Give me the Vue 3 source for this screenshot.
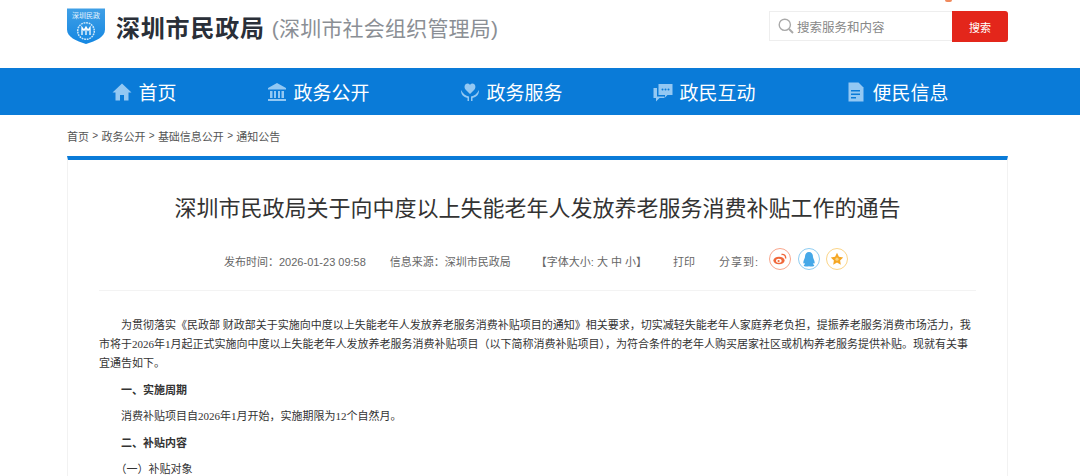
<template>
  <div class="page">
    <header class="top container">
      <div class="brand">
        <svg class="logo" width="38" height="36" viewBox="0 0 38 36">
          <defs>
            <linearGradient id="shield" x1="0" y1="0" x2="0" y2="1">
              <stop offset="0" stop-color="#3f9fe6" />
              <stop offset="1" stop-color="#1487e2" />
            </linearGradient>
          </defs>
          <path d="M0 .5h38v21c0 7.500-9 11.500-19 14.500C9 33 0 29 0 21.500z" fill="url(#shield)" />
          <circle cx="19" cy="23" r="8.300" fill="none" stroke="#cfe8fa" stroke-width="1.500" stroke-dasharray="1.800 .8" />
          <path d="M15 27v-7.500l2 2.800 2-3.300 2 3.300 2-2.800V27M19 21v6" fill="none" stroke="#fff" stroke-width="1.300" />
          <text x="19" y="10" text-anchor="middle" class="logo-text">深圳民政</text>
        </svg>
        <span class="brand-name">深圳市民政局</span>
        <span class="brand-sub">(深圳市社会组织管理局)</span>
      </div>
      <div class="search">
        <div class="search-box">
          <svg width="16" height="16" viewBox="0 0 16 16" fill="none" stroke="#a9a9a9">
            <circle cx="6.800" cy="6.800" r="5.600" stroke-width="1.400" />
            <path d="M11 11l4 4" stroke-width="2" />
          </svg>
          <span>搜索服务和内容</span>
        </div>
        <button type="button" class="search-btn">搜索</button>
      </div>
      <span class="corner-mark"></span>
    </header>

    <nav class="nav">
      <div class="nav-inner">
        <a v-for="item in navItems" :key="item.label" class="nav-item">
          <svg width="20" height="20" viewBox="0 0 20 20" fill="#93c8f3" v-html="item.icon"></svg>
          <span>{{ item.label }}</span>
        </a>
      </div>
    </nav>

    <div class="crumbs container">
      <template v-for="(c, i) in crumbs" :key="c">
        <span v-if="i" class="sep">&gt;</span>
        <span>{{ c }}</span>
      </template>
    </div>

    <main class="card container">
      <h1>深圳市民政局关于向中度以上失能老年人发放养老服务消费补贴工作的通告</h1>
      <div class="meta">
        <span class="date">发布时间：2026-01-23 09:58</span>
        <span class="source">信息来源：深圳市民政局</span>
        <span class="size">【字体大小: 大 中 小】</span>
        <span class="print">打印</span>
        <span class="share">分享到:</span>
        <span class="share-icon weibo">
          <svg width="14" height="12" viewBox="0 0 14 12">
            <ellipse cx="6" cy="7.500" rx="5.600" ry="3.800" fill="#f0683a" />
            <ellipse cx="5.800" cy="7.800" rx="2.800" ry="2" fill="#fff" />
            <circle cx="5.600" cy="8" r="1.100" fill="#f0683a" />
            <path d="M8.500 1.500c2.500-.6 4.600 1.400 4 4" fill="none" stroke="#f0683a" stroke-width="1.400" />
          </svg>
        </span>
        <span class="share-icon qq">
          <svg width="12" height="15" viewBox="0 0 12 15">
            <path d="M6 0c2.800 0 4 2.200 4 5 0 1 1.700 3.500 1.700 5.800 0 1-.7 1-1.500.2-.2 1 .1 1.500 1 2.300.3.800-1 1.200-3 1.200-1 0-1.600-.3-2.200-.3s-1.200.3-2.200.3c-2 0-3.300-.4-3-1.200.9-.8 1.200-1.300 1-2.300-.8.8-1.500.8-1.500-.2C.3 8.500 2 6 2 5c0-2.800 1.200-5 4-5z" fill="#46a8e8" />
          </svg>
        </span>
        <span class="share-icon star">
          <svg width="14" height="14" viewBox="0 0 14 14">
            <path d="M7 .8l1.900 4 4.300.6-3.100 3 .7 4.300L7 10.600l-3.800 2.100.7-4.300-3.100-3 4.300-.6z" fill="#f5a623" />
            <circle cx="7" cy="7.200" r="1.600" fill="#fbd27e" />
          </svg>
        </span>
      </div>
      <article class="content">
        <p>为贯彻落实《民政部 财政部关于实施向中度以上失能老年人发放养老服务消费补贴项目的通知》相关要求，切实减轻失能老年人家庭养老负担，提振养老服务消费市场活力，我市将于2026年1月起正式实施向中度以上失能老年人发放养老服务消费补贴项目（以下简称消费补贴项目），为符合条件的老年人购买居家社区或机构养老服务提供补贴。现就有关事宜通告如下。</p>
        <p class="strong">一、实施周期</p>
        <p>消费补贴项目自2026年1月开始，实施期限为12个自然月。</p>
        <p class="strong">二、补贴内容</p>
        <p class="sub">（一）补贴对象</p>
      </article>
    </main>
  </div>
</template>

<script setup>
const navItems = [
  { label: '首页', icon: '<path d="M10 1.500 .5 10.500h3v8H8V13h4v5.500h4.500v-8h3z"/>' },
  { label: '政务公开', icon: '<path d="M10 1 1 6v1.500h18V6zM1 17h18v2H1zM3 9h2.500v7H3zM7 9h2v7H7zM11 9h2v7h-2zM14.500 9H17v7h-2.500z"/>' },
  { label: '政务服务', icon: '<path d="M10 12 5.500 7.500C3.500 5 5 1.500 7.500 1.500c1 0 2 .5 2.500 1.500.5-1 1.500-1.500 2.500-1.500C15 1.500 16.500 5 14.500 7.500z"/><path d="M1 8c0 5 2.500 7 6.500 8v3H9v-4.500C5.500 13.500 3 12 1 8zM19 8c0 5-2.500 7-6.500 8v3H11v-4.500c3.500-1 6-2.500 8-6.500z"/>' },
  { label: '政民互动', icon: '<path d="M5.500 2h14v11h-5L12 15.500V13H5.500z"/><path d="M4 6H.5v10H3v3.500L6.500 16h5v-1.500H4z"/><circle cx="9.500" cy="7.500" r="1" fill="#0a7bd8"/><circle cx="12.500" cy="7.500" r="1" fill="#0a7bd8"/><circle cx="15.500" cy="7.500" r="1" fill="#0a7bd8"/>' },
  { label: '便民信息', icon: '<path d="M2.500.5h10l5 5v14h-15z"/><path d="M5 8h9v1.500H5zM5 11.500h9V13H5zM5 15h5v1.500H5z" fill="#0a7bd8"/>' },
]

const crumbs = ['首页', '政务公开', '基础信息公开', '通知公告']
</script>

<style>
html,
body {
  margin: 0;
  background: #fff;
  overflow: hidden;
}
</style>

<style scoped>
.page {
  height: 476px;
  overflow: hidden;
  font-family: 'Liberation Sans', 'Noto Sans CJK SC', sans-serif;
  color: #666;
}

.container {
  width: 941px;
  margin: 0 auto;
  box-sizing: border-box;
  position: relative;
  left: -2.500px;
}

.top {
  height: 68px;
  display: flex;
  justify-content: space-between;
  align-items: flex-start;
}

.brand {
  display: flex;
  align-items: center;
  height: 53px;
}

.logo {
  align-self: flex-start;
  margin-top: 8px;
}

.logo-text {
  font-size: 7px;
  fill: #e6f4ff;
  font-family: 'Liberation Serif', 'Noto Sans CJK SC', serif;
}

.brand-name {
  margin-left: 11px;
  font-size: 24px;
  font-weight: 700;
  color: #2a2f38;
  letter-spacing: 0.8px;
}

.brand-sub {
  margin-left: 7px;
  font-size: 21px;
  color: #8b8f95;
  letter-spacing: 0.2px;
}

.search {
  display: flex;
  margin-top: 11px;
}

.search-box {
  width: 183px;
  height: 30px;
  border: 1px solid #eee;
  border-right: none;
  display: flex;
  align-items: center;
  gap: 3px;
  padding-left: 8px;
  box-sizing: border-box;
  font-size: 12.500px;
  color: #888;
}

.search-btn {
  width: 56px;
  height: 31px;
  border: none;
  border-radius: 0 3px 3px 0;
  background: #e3261b;
  color: #fff;
  font-size: 11px;
  font-family: inherit;
  padding: 0;
}

.corner-mark {
  position: absolute;
  left: 878px;
  top: 0;
  width: 7px;
  height: 2px;
  background: #f08a5d;
  border-radius: 0 0 3px 3px;
}

.nav {
  height: 47px;
  background: #0a7bd8;
  box-sizing: border-box;
}

.nav-inner {
  display: flex;
  gap: 90px;
  padding-left: 111.500px;
}

.nav-item {
  display: flex;
  align-items: center;
  gap: 7px;
  height: 47px;
  color: #fff;
  font-size: 19px;
}

.crumbs {
  height: 41px;
  display: flex;
  align-items: center;
  gap: 3.300px;
  font-size: 11px;
  color: #555;
}

.sep {
  font-size: 10px;
}

.card {
  border: 1px solid #f2f2f2;
  border-top: 4px solid #0a7bd8;
  padding: 0 31px;
  height: 400px;
}

h1 {
  margin: 32px 0 0;
  height: 34px;
  line-height: 34px;
  text-align: center;
  font-size: 22px;
  font-weight: 400;
  color: #333;
}

.meta {
  display: flex;
  align-items: center;
  height: 65px;
  padding: 5px 0 0 125px;
  border-bottom: 1px solid #f3f3f3;
  font-size: 11px;
  color: #666;
  box-sizing: border-box;
}

.source {
  margin-left: 24px;
}

.size {
  margin-left: 25px;
}

.print {
  margin-left: 26px;
}

.share {
  margin-left: 24px;
  letter-spacing: 1px;
}

.share-icon {
  width: 22px;
  height: 22px;
  border-radius: 50%;
  border: 1px solid;
  box-sizing: border-box;
  display: flex;
  align-items: center;
  justify-content: center;
  margin: -3px 6.500px 0 0;
}

.weibo {
  border-color: #f9a68c;
  margin-left: 10px;
}

.qq {
  border-color: #8fcdf2;
}

.star {
  border-color: #fbd588;
}

.content {
  padding-top: 25px;
  font-family: 'Liberation Serif', 'Noto Sans CJK SC', serif;
  font-size: 11px;
  color: #333;
}

.content p {
  margin: 0 0 7.500px;
  line-height: 19px;
  text-indent: 2em;
}

.content .sub {
  text-indent: 16.500px;
}

.strong {
  font-weight: 700;
}
</style>
